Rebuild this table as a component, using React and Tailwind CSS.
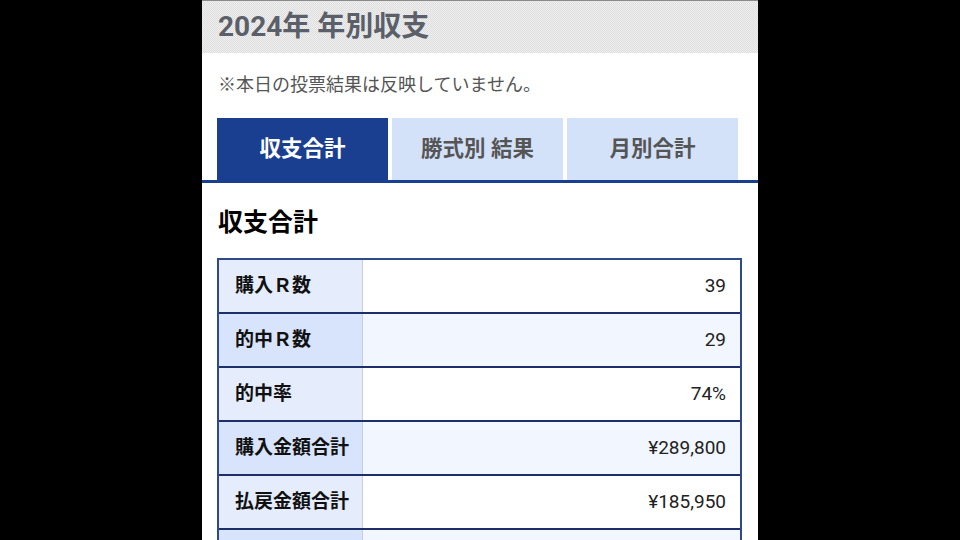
import React, { useState } from "react";

const rows = [
  { label: "購入Ｒ数", value: "39" },
  { label: "的中Ｒ数", value: "29" },
  { label: "的中率", value: "74%" },
  { label: "購入金額合計", value: "¥289,800" },
  { label: "払戻金額合計", value: "¥185,950" },
  { label: "収支合計", value: "-¥103,850" },
  { label: "回収率", value: "64%" },
];

const tabs = ["収支合計", "勝式別 結果", "月別合計"];

const App = () => {
  const [active, setActive] = useState(0);

  return (
    <div className="min-h-screen bg-black font-['Roboto','Noto_Sans_CJK_JP',sans-serif]">
      <div className="w-[556px] mx-auto bg-white min-h-screen">
        <div className="h-[53px] flex items-center pl-4 border-t border-[#8a8a8a] bg-[conic-gradient(#dedede_25%,#efefef_0_50%,#dedede_0_75%,#efefef_0)] bg-[length:2px_2px]">
          <h1 className="text-[28px] font-bold text-[#5b5f69] leading-none">
            2024年 年別収支
          </h1>
        </div>

        <p className="pt-[20px] pl-4 text-[18px] leading-6 text-[#555]">
          ※本日の投票結果は反映していません。
        </p>

        <div className="mt-[21px] pl-[15px] flex gap-1 border-b-[3px] border-[#1a3f91]">
          {tabs.map((t, i) => (
            <button
              key={t}
              onClick={() => setActive(i)}
              className={
                i === active
                  ? "w-[171px] h-[62px] bg-[#1a3f91] text-white text-[21.5px] font-bold"
                  : "w-[171px] h-[62px] bg-[#d3e1f9] text-[#555] text-[21.5px] font-bold"
              }
            >
              {t}
            </button>
          ))}
        </div>

        <div className="px-[15px]">
          <h2 className="pt-[24px] pl-px text-[25px] leading-8 font-bold text-black">
            収支合計
          </h2>

          <div className="mt-[19px] w-[525px] border-2 border-[#2f4a8a]">
            {rows.map((r, i) => (
              <div
                key={r.label}
                className={
                  i === 0
                    ? "flex h-[52px]"
                    : "flex h-[54px] border-t-2 border-[#1d2f6b]"
                }
              >
                <div
                  className={
                    i % 2 === 0
                      ? "w-[144px] flex items-center pl-[16px] bg-[#e5edfc] border-r border-[#c9cdd6] text-[19px] font-bold text-[#111]"
                      : "w-[144px] flex items-center pl-[16px] bg-[#d8e4fb] border-r border-[#c9cdd6] text-[19px] font-bold text-[#111]"
                  }
                >
                  {r.label}
                </div>
                <div
                  className={
                    i % 2 === 0
                      ? "flex-1 flex items-center justify-end pr-[14px] bg-white text-[19px] text-[#222]"
                      : "flex-1 flex items-center justify-end pr-[14px] bg-[#f1f6ff] text-[19px] text-[#222]"
                  }
                >
                  {r.value}
                </div>
              </div>
            ))}
          </div>
        </div>
      </div>
    </div>
  );
};

export default App;
